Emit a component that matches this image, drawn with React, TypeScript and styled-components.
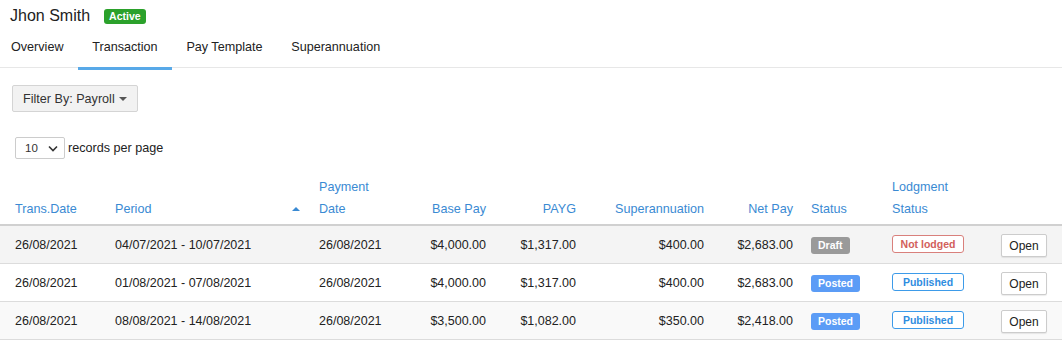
import styled, { createGlobalStyle } from "styled-components";

const GlobalStyle = createGlobalStyle`
  body {
    margin: 0;
    background: #fff;
    font-family: "Liberation Sans", Arial, sans-serif;
    color: #333;
  }
`;

const Page = styled.div`
  width: 1062px;
  height: 341px;
  overflow: hidden;
  background: #fff;
`;

const Header = styled.div`
  display: flex;
  align-items: center;
  padding: 5px 10px 0;
  height: 21px;
`;

const Name = styled.h1`
  margin: 0;
  font-size: 16px;
  font-weight: 400;
  line-height: 20px;
  color: #222;
`;

const Pill = styled.span`
  margin-left: 14px;
  background: #2ba12b;
  color: #fff;
  font-size: 10.5px;
  font-weight: 700;
  line-height: 15px;
  height: 15px;
  padding: 0 5px;
  border-radius: 3px;
  margin-top: 1px;
`;

const Tabs = styled.nav`
  display: flex;
  border-bottom: 1px solid #e7e7e7;
`;

const Tab = styled.a<{ $active?: boolean }>`
  display: flex;
  align-items: center;
  height: 41px;
  padding: 0 14.4px;
  font-size: 12.6px;
  color: #222;
  border-bottom: 3px solid ${(p) => (p.$active ? "#58a9e8" : "transparent")};
  margin-bottom: -3px;
  cursor: pointer;

  &:first-child {
    padding-left: 11px;
  }
`;

const Toolbar = styled.div`
  padding: 17px 12px 0;
`;

const FilterButton = styled.button`
  display: inline-flex;
  align-items: center;
  gap: 4px;
  height: 27px;
  padding: 0 10px;
  font-family: inherit;
  font-size: 12.6px;
  color: #333;
  background: #f2f2f2;
  border: 1px solid #d4d4d4;
  border-radius: 2px;
`;

const Caret = styled.span`
  width: 0;
  height: 0;
  border-left: 4px solid transparent;
  border-right: 4px solid transparent;
  border-top: 4px solid #555;
  margin-top: 1px;
`;

const PageSize = styled.div`
  display: flex;
  align-items: center;
  gap: 3px;
  margin: 25px 0 0 3px;
  font-size: 12.6px;
  color: #222;
`;

const SizeBox = styled.div`
  display: flex;
  align-items: center;
  justify-content: space-between;
  width: 50px;
  height: 22px;
  box-sizing: border-box;
  padding: 0 6px 0 9px;
  border: 1px solid #ccc;
  border-radius: 2px;
  font-size: 11.5px;
  color: #333;
`;

const Table = styled.table`
  width: 1062px;
  margin-top: 13px;
  border-collapse: collapse;
  table-layout: fixed;
  font-size: 12.5px;
`;

const Th = styled.th<{ $right?: boolean }>`
  padding: 4px 8px;
  line-height: 22px;
  font-size: 12.6px;
  font-weight: 400;
  color: #3a8ad3;
  text-align: ${(p) => (p.$right ? "right" : "left")};
  vertical-align: bottom;
  border-bottom: 2px solid #d0d0d0;
  position: relative;

  &:first-child {
    padding-left: 15px;
  }
`;

const SortArrow = styled.span`
  position: absolute;
  right: 11px;
  bottom: 13px;
  width: 0;
  height: 0;
  border-left: 4px solid transparent;
  border-right: 4px solid transparent;
  border-bottom: 4px solid #3a8ad3;
`;

const Row = styled.tr<{ $bg: string }>`
  background: ${(p) => p.$bg};
`;

const Td = styled.td<{ $right?: boolean }>`
  height: 37px;
  padding: 0 8px;
  color: #222;
  text-align: ${(p) => (p.$right ? "right" : "left")};
  vertical-align: middle;
  border-bottom: 1px solid #dcdcdc;
  white-space: nowrap;

  &:first-child {
    padding-left: 15px;
  }
`;

const StatusBadge = styled.span<{ $color: string }>`
  display: inline-block;
  background: ${(p) => p.$color};
  color: #fff;
  font-size: 10.5px;
  font-weight: 700;
  line-height: 17px;
  padding: 0 7px;
  border-radius: 3px;
  margin-top: 1px;
`;

const LodgeBadge = styled.span<{ $color: string; $text: string }>`
  display: inline-block;
  width: 72px;
  box-sizing: border-box;
  text-align: center;
  border: 1px solid ${(p) => p.$color};
  color: ${(p) => p.$text};
  background: #fff;
  font-size: 10.5px;
  font-weight: 700;
  line-height: 16px;
  border-radius: 3px;
  margin-top: -3px;
`;

const OpenButton = styled.button`
  width: 46px;
  height: 23px;
  padding: 0;
  font-family: inherit;
  font-size: 12px;
  color: #222;
  background: #fff;
  border: 1px solid #ccc;
  border-radius: 2px;
  box-shadow: 0 1px 1px rgba(0, 0, 0, 0.08);
  margin-top: 2px;
`;

type Tx = {
  date: string;
  period: string;
  payDate: string;
  base: string;
  payg: string;
  super: string;
  net: string;
  status: "Draft" | "Posted";
  lodged: boolean;
};

const rows: Tx[] = [
  { date: "26/08/2021", period: "04/07/2021 - 10/07/2021", payDate: "26/08/2021", base: "$4,000.00", payg: "$1,317.00", super: "$400.00", net: "$2,683.00", status: "Draft", lodged: false },
  { date: "26/08/2021", period: "01/08/2021 - 07/08/2021", payDate: "26/08/2021", base: "$4,000.00", payg: "$1,317.00", super: "$400.00", net: "$2,683.00", status: "Posted", lodged: true },
  { date: "26/08/2021", period: "08/08/2021 - 14/08/2021", payDate: "26/08/2021", base: "$3,500.00", payg: "$1,082.00", super: "$350.00", net: "$2,418.00", status: "Posted", lodged: true },
];

const rowBg = ["#f4f4f4", "#ffffff", "#f9f9f9"];
const widths = [107, 204, 89, 94, 90, 128, 89, 83, 109, 69];

export default function App() {
  return (
    <Page>
      <GlobalStyle />
      <Header>
        <Name>Jhon Smith</Name>
        <Pill>Active</Pill>
      </Header>
      <Tabs>
        <Tab>Overview</Tab>
        <Tab $active>Transaction</Tab>
        <Tab>Pay Template</Tab>
        <Tab>Superannuation</Tab>
      </Tabs>
      <Toolbar>
        <FilterButton>
          Filter By: Payroll <Caret />
        </FilterButton>
        <PageSize>
          <SizeBox>
            10
            <svg width="10" height="7" viewBox="0 0 10 7">
              <path d="M1 1.5 L5 5.5 L9 1.5" fill="none" stroke="#333" strokeWidth="1.6" />
            </svg>
          </SizeBox>
          records per page
        </PageSize>
      </Toolbar>
      <Table>
        <colgroup>
          {widths.map((w, i) => (
            <col key={i} style={{ width: w }} />
          ))}
        </colgroup>
        <thead>
          <tr>
            <Th>Trans.Date</Th>
            <Th>
              Period
              <SortArrow />
            </Th>
            <Th>
              Payment
              <br />
              Date
            </Th>
            <Th $right>Base Pay</Th>
            <Th $right>PAYG</Th>
            <Th $right>Superannuation</Th>
            <Th $right>Net Pay</Th>
            <Th style={{ paddingLeft: 10 }}>Status</Th>
            <Th>
              Lodgment
              <br />
              Status
            </Th>
            <Th />
          </tr>
        </thead>
        <tbody>
          {rows.map((r, i) => (
            <Row key={i} $bg={rowBg[i]}>
              <Td>{r.date}</Td>
              <Td>{r.period}</Td>
              <Td>{r.payDate}</Td>
              <Td $right>{r.base}</Td>
              <Td $right>{r.payg}</Td>
              <Td $right>{r.super}</Td>
              <Td $right>{r.net}</Td>
              <Td style={{ paddingLeft: 10 }}>
                <StatusBadge $color={r.status === "Draft" ? "#9a9a9a" : "#5b9cf6"}>{r.status}</StatusBadge>
              </Td>
              <Td>
                {r.lodged ? (
                  <LodgeBadge $color="#3d9be9" $text="#2f8de0">Published</LodgeBadge>
                ) : (
                  <LodgeBadge $color="#d9807c" $text="#d2605b">Not lodged</LodgeBadge>
                )}
              </Td>
              <Td>
                <OpenButton>Open</OpenButton>
              </Td>
            </Row>
          ))}
        </tbody>
      </Table>
    </Page>
  );
}
